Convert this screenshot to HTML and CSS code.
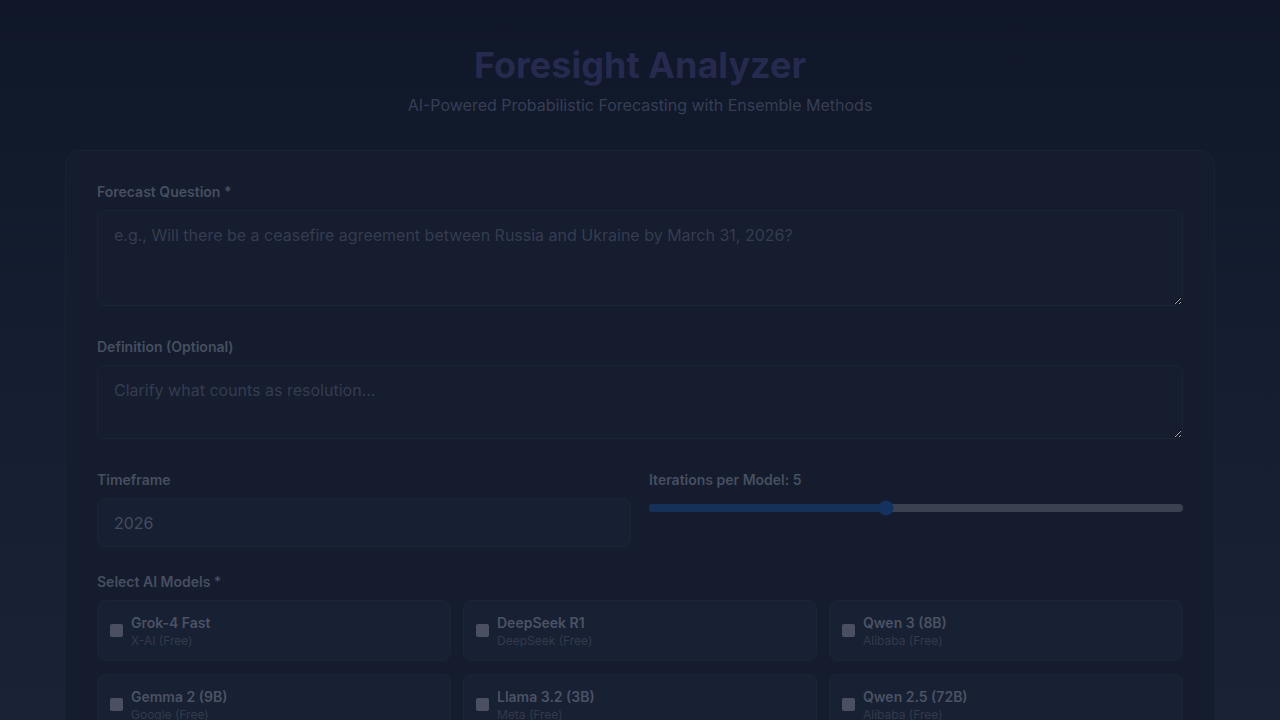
FILE: index.html
```html
<!DOCTYPE html>
<html lang="en">
<head>
<meta charset="utf-8">
<title>Foresight Analyzer</title>
<link rel="stylesheet" href="styles.css">
</head>
<body>
<div class="page">
  <header class="hero">
    <h1 class="title">Foresight Analyzer</h1>
    <p class="subtitle">AI-Powered Probabilistic Forecasting with Ensemble Methods</p>
  </header>
  <main class="card">
    <div class="field">
      <label class="label">Forecast Question *</label>
      <textarea class="textarea tall" placeholder="e.g., Will there be a ceasefire agreement between Russia and Ukraine by March 31, 2026?"></textarea>
    </div>
    <div class="field">
      <label class="label">Definition (Optional)</label>
      <textarea class="textarea short" placeholder="Clarify what counts as resolution..."></textarea>
    </div>
    <div class="row">
      <div class="field">
        <label class="label">Timeframe</label>
        <div class="input">2026</div>
      </div>
      <div class="field">
        <label class="label slabel">Iterations per Model: 5</label>
        <div class="slider">
          <div class="fill" style="width:44.4%"></div>
          <div class="thumb" style="left:44.4%"></div>
        </div>
      </div>
    </div>
    <div class="field models-field">
      <label class="label">Select AI Models *</label>
      <div class="models">
        <div class="model"><span class="box"></span><div class="mtext"><div class="mname">Grok-4 Fast</div><div class="msub">X-AI (Free)</div></div></div>
        <div class="model"><span class="box"></span><div class="mtext"><div class="mname">DeepSeek R1</div><div class="msub">DeepSeek (Free)</div></div></div>
        <div class="model"><span class="box"></span><div class="mtext"><div class="mname">Qwen 3 (8B)</div><div class="msub">Alibaba (Free)</div></div></div>
        <div class="model"><span class="box"></span><div class="mtext"><div class="mname">Gemma 2 (9B)</div><div class="msub">Google (Free)</div></div></div>
        <div class="model"><span class="box"></span><div class="mtext"><div class="mname">Llama 3.2 (3B)</div><div class="msub">Meta (Free)</div></div></div>
        <div class="model"><span class="box"></span><div class="mtext"><div class="mname">Qwen 2.5 (72B)</div><div class="msub">Alibaba (Free)</div></div></div>
      </div>
    </div>
  </main>
</div>
</body>
</html>
```
FILE: styles.css
```css
* { box-sizing: border-box; }
html, body { margin: 0; height: 100%; }
body {
  font-family: Inter, "Noto Sans", sans-serif;
  background: linear-gradient(180deg, #0f1729 0%, #151d30 50%, #1a2235 100%);
  overflow: hidden;
}
.page {
  width: 1150px;
  margin: 0 auto;
  padding-top: 42px;
}
.hero { text-align: center; }
.title {
  margin: 0;
  font-size: 36px;
  font-weight: 700;
  line-height: 46px;
  color: #252a4e;
}
.subtitle {
  margin: 5px 0 0;
  font-size: 16px;
  line-height: 24px;
  color: #373e54;
}
.card {
  margin-top: 33px;
  border: 1px solid #192134;
  border-radius: 14px;
  background: #141c2e;
  padding: 31px 31px 40px;
  display: flex;
  flex-direction: column;
  gap: 24px;
}
.field { display: flex; flex-direction: column; }
.label {
  font-size: 14px;
  font-weight: 600;
  line-height: 20px;
  color: #474e60;
  margin-bottom: 8px;
}
.textarea {
  font-family: Inter, "Noto Sans", sans-serif;
  font-size: 16px;
  line-height: 24px;
  color: #4a5163;
  background: #151d2f;
  border: 1px solid #1b2336;
  border-radius: 8px;
  padding: 12px 16px;
  resize: vertical;
  outline: none;
  display: block;
  width: 100%;
  margin-bottom: 7px;
}
.textarea::placeholder { color: #353c4f; }
.tall { height: 96px; }
.short { height: 74px; }
.row {
  display: grid;
  grid-template-columns: 1fr 1fr;
  gap: 18px;
}
.input {
  height: 49px;
  border: 1px solid #1b2336;
  border-radius: 8px;
  background: #172033;
  padding: 0 16px;
  display: flex;
  align-items: center;
  font-size: 16px;
  color: #454c5e;
}
.slabel { margin-bottom: 14px; }
.slider {
  position: relative;
  height: 8px;
  border-radius: 4px;
  background: #3a4252;
}
.fill {
  position: absolute;
  left: 0; top: 0; bottom: 0;
  border-radius: 4px;
  background: #15315a;
}
.thumb {
  position: absolute;
  top: 50%;
  width: 15px;
  height: 15px;
  border-radius: 50%;
  background: #133260;
  transform: translate(-50%, -50%);
}
.models-field { margin-top: 1px; }
.models {
  display: grid;
  grid-template-columns: repeat(3, 1fr);
  gap: 13px 12px;
}
.model {
  height: 61px;
  border: 1px solid #1b2336;
  border-radius: 8px;
  background: #182033;
  display: flex;
  align-items: center;
  gap: 8px;
  padding: 0 12px;
}
.box {
  width: 13px;
  height: 13px;
  border-radius: 2px;
  background: #4a5061;
  flex: none;
}
.mtext { display: flex; flex-direction: column; }
.mname {
  font-size: 14px;
  font-weight: 600;
  line-height: 20px;
  color: #4b5264;
}
.msub {
  font-size: 12px;
  line-height: 16px;
  color: #333a4d;
}
```
